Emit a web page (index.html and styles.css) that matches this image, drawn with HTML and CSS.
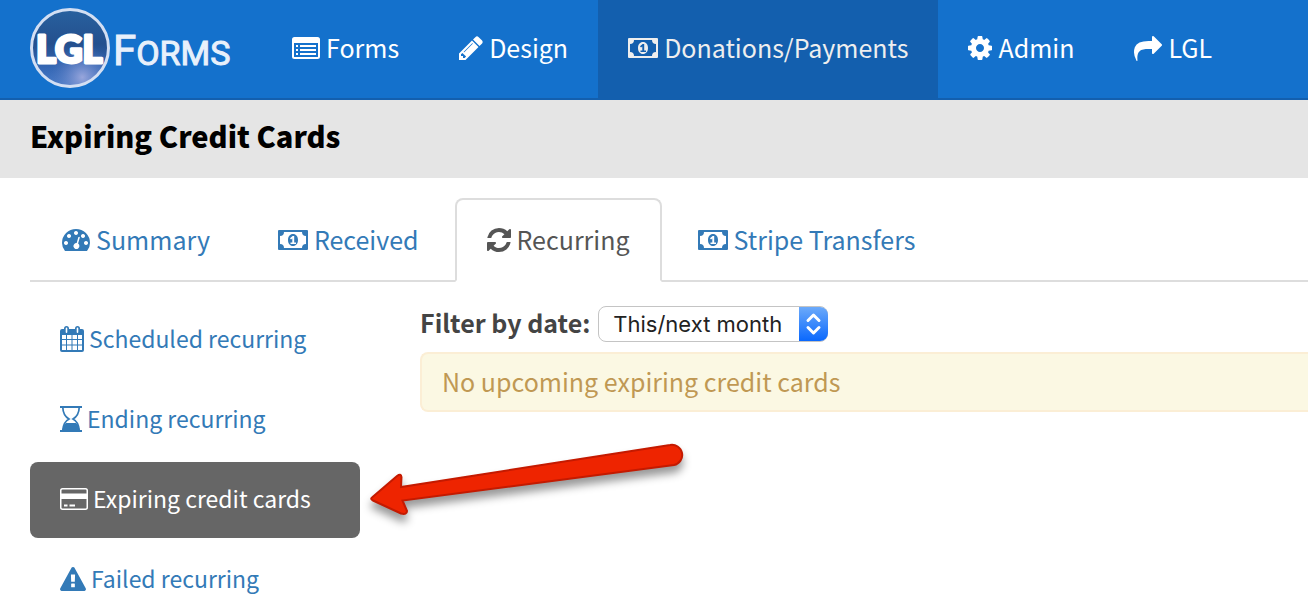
FILE: index.html
```html
<!DOCTYPE html>
<html lang="en">
<head>
<meta charset="utf-8">
<meta name="viewport" content="width=device-width, initial-scale=1">
<title>Expiring Credit Cards</title>
<link rel="stylesheet" href="styles.css">
</head>
<body>
<svg class="defs" aria-hidden="true">
  <symbol id="money" viewBox="0 0 30 20"><path fill-rule="evenodd" d="M1 0H29Q30 0 30 1V19Q30 20 29 20H1Q0 20 0 19V1Q0 0 1 0zM6 2A4 4 0 0 1 2 6V14A4 4 0 0 1 6 18H24A4 4 0 0 1 28 14V6A4 4 0 0 1 24 2z"/><path fill-rule="evenodd" d="M15 4C18 4 20 6.500 20 10S18 16 15 16 10 13.500 10 10 12 4 15 4zM12.500 14H18V12.500H16.200V6H14.600L12 8.300L13 9.500L14.300 8.500V12.500H12.500z"/></symbol>
</svg>
<header class="navbar">
  <a class="brand" href="#" aria-label="LGL Forms">
    <svg class="logo" viewBox="0 0 204 80">
      <defs>
        <linearGradient id="disc" x1="0" y1="0" x2="0" y2="1"><stop offset="0" stop-color="#28619f"/><stop offset=".45" stop-color="#24508e"/><stop offset=".75" stop-color="#3567b4"/><stop offset="1" stop-color="#4a7cc8"/></linearGradient>
        <radialGradient id="glow" cx=".66" cy=".88" r=".42"><stop offset="0" stop-color="#98a6dc"/><stop offset="1" stop-color="#5277c0" stop-opacity="0"/></radialGradient>
      </defs>
      <circle cx="40" cy="40" r="38.500" fill="url(#disc)"/>
      <circle cx="40" cy="40" r="38.500" fill="url(#glow)" stroke="#d3dff3" stroke-width="3"/>
      <text class="logo-mark" x="6" y="55">LGL</text>
      <text class="logo-word" x="83" y="57"><tspan class="logo-cap">F</tspan>ORMS</text>
    </svg>
  </a>
  <nav class="menu" aria-label="Main">
    <a class="menu-link" href="#"><svg class="icon" width="28" height="22" viewBox="0 0 28 22"><path fill-rule="evenodd" d="M2.500 0H25.500Q28 0 28 2.500V19.500Q28 22 25.500 22H2.500Q0 22 0 19.500V2.500Q0 0 2.500 0zM2 6V19.500Q2 20 2.500 20H25.500Q26 20 26 19.500V6z"/><path d="M4 8h2v2H4zM8 8h16v2H8zM4 12h2v2H4zM8 12h16v2H8zM4 16h2v2H4zM8 16h16v2H8z"/></svg><span>Forms</span></a>
    <a class="menu-link" href="#"><svg class="icon" width="24" height="24" viewBox="128 128 1536 1536"><path d="M491 1536l91-91-235-235-91 91v107h128v128h107zm523-928q0-22-22-22-10 0-17 7l-542 542q-7 7-7 17 0 22 22 22 10 0 17-7l542-542q7-7 7-17zm-54-192l416 416-832 832h-416v-416zm683 96q0 53-37 90l-166 166-416-416 166-165q36-38 90-38 53 0 91 38l235 234q37 39 37 91z"/></svg><span>Design</span></a>
    <a class="menu-link active" href="#" aria-current="page"><svg class="icon" width="30" height="20"><use href="#money"/></svg><span>Donations/Payments</span></a>
    <a class="menu-link" href="#"><svg class="icon" width="24" height="24" viewBox="128 128 1536 1536"><path d="M1152 896q0-106-75-181t-181-75-181 75-75 181 75 181 181 75 181-75 75-181zm512-109v222q0 12-8 23t-20 13l-185 28q-19 54-39 91 35 50 107 138 10 12 10 25t-9 23q-27 37-99 108t-94 71q-12 0-26-9l-138-108q-44 23-91 38-16 136-29 186-7 28-36 28h-222q-14 0-24.500-8.500t-11.500-21.500l-28-184q-49-16-90-37l-141 107q-10 9-25 9-14 0-25-11-126-114-165-168-7-10-7-23 0-12 8-23 15-21 51-66.500t54-70.500q-27-50-41-99l-183-27q-13-2-21-12.500t-8-23.500v-222q0-12 8-23t19-13l186-28q14-46 39-92-40-57-107-138-10-12-10-24 0-10 9-23 26-36 98.500-107.500t94.500-71.500q13 0 26 10l138 107q44-23 91-38 16-136 29-186 7-28 36-28h222q14 0 24.500 8.500t11.500 21.500l28 184q49 16 90 37l142-107q9-9 24-9 13 0 25 10 129 119 165 170 7 8 7 22 0 12-8 23-15 21-51 66.500t-54 70.500q26 50 41 98l183 28q13 2 21 12.500t8 23.500z"/></svg><span>Admin</span></a>
    <a class="menu-link" href="#"><svg class="icon" width="28" height="26" viewBox="0 0 1792 1664"><path d="M1792 640q0 26-19 45l-512 512q-19 19-45 19t-45-19-19-45v-256h-224q-98 0-175.500 6t-154 21.500-133 42.500-105.500 69.500-80 101-48.500 138.500-17.500 181q0 55 5 123 0 6 2.500 23.500t2.500 26.500q0 15-8.500 25t-23.500 10q-16 0-28-17-7-9-13-22t-13.500-30-10.500-24q-127-285-127-451 0-199 53-333 162-403 875-403h224v-256q0-26 19-45t45-19 45 19l512 512q19 19 19 45z"/></svg><span>LGL</span></a>
  </nav>
</header>
<div class="page-head"><h1>Expiring Credit Cards</h1></div>
<main class="page">
  <nav class="tabs" aria-label="Donations">
    <a class="tab" href="#"><svg class="icon" width="28" height="22" viewBox="0 0 28 22"><path fill-rule="evenodd" d="M3 22Q0 18.500 0 14A14 14 0 0 1 28 14Q28 18.500 25 22zM14 2a2 2 0 1 0 .01 0zM7 5a2 2 0 1 0 .01 0zM21 5a2 2 0 1 0 .01 0zM4 12a2 2 0 1 0 .01 0zM24 12a2 2 0 1 0 .01 0zM16.300 8.200L14.700 14.100A3 3 0 1 0 16.100 14.600L17.800 8.600Q17.800 7.200 16.300 8.200z"/></svg><span>Summary</span></a>
    <a class="tab" href="#"><svg class="icon" width="30" height="20"><use href="#money"/></svg><span>Received</span></a>
    <a class="tab active" href="#" aria-current="page"><svg class="icon" width="24" height="24" viewBox="128 128 1536 1536"><path d="M1639 1056q0 5-1 7-64 268-268 434.500t-478 166.500q-146 0-282.500-55t-243.500-157l-129 129q-19 19-45 19t-45-19-19-45v-448q0-26 19-45t45-19h448q26 0 45 19t19 45-19 45l-137 137q71 66 161 102t187 36q134 0 250-65t186-179q11-17 53-117 8-23 30-23h192q13 0 22.500 9.500t9.500 22.500zm25-800v448q0 26-19 45t-45 19h-448q-26 0-45-19t-19-45 19-45l138-138q-148-137-349-137-134 0-250 65t-186 179q-11 17-53 117-8 23-30 23h-199q-13 0-22.500-9.500t-9.500-22.500v-7q65-268 270-434.500t480-166.500q146 0 284 55.500t245 156.500l130-129q19-19 45-19t45 19 19 45z"/></svg><span>Recurring</span></a>
    <a class="tab" href="#"><svg class="icon" width="30" height="20"><use href="#money"/></svg><span>Stripe Transfers</span></a>
  </nav>
  <div class="columns">
    <nav class="side" aria-label="Recurring">
      <a class="side-link" href="#"><svg class="icon" width="24" height="26" viewBox="0 0 24 26"><path fill-rule="evenodd" d="M2 3H4V2.500Q4 0 6.500 0T9 2.500V3H15V2.500Q15 0 17.500 0T20 2.500V3H22Q24 3 24 5V24Q24 26 22 26H2Q0 26 0 24V5Q0 3 2 3zM5.700 2.500V6Q5.700 7 6.500 7T7.300 6V2.500Q7.300 1.500 6.500 1.500T5.700 2.500zM16.700 2.500V6Q16.700 7 17.500 7T18.300 6V2.500Q18.300 1.500 17.500 1.500T16.700 2.500zM2 9V13H6V9zM7 9V13H11.500V9zM12.500 9V13H17V9zM18 9V13H22V9zM2 14V18.500H6V14zM7 14V18.500H11.500V14zM12.500 14V18.500H17V14zM18 14V18.500H22V14zM2 19.500V24H6V19.500zM7 19.500V24H11.500V19.500zM12.500 19.500V24H17V19.500zM18 19.500V24H22V19.500z"/></svg><span>Scheduled recurring</span></a>
      <a class="side-link" href="#"><svg class="icon" width="22" height="26" viewBox="0 0 22 26"><path d="M0 0H22V2H0zM0 24H22V26H0zM2 24Q2.500 20 6 17H16Q19.500 20 20 24z"/><path d="M2.800 1.500C3 8 5.500 11 9 13C5.500 15 3 18 2.800 24.500M19.200 1.500C19 8 16.500 11 13 13C16.500 15 19 18 19.200 24.500" fill="none" stroke="currentColor" stroke-width="1.700"/></svg><span>Ending recurring</span></a>
      <a class="side-link active" href="#" aria-current="page"><svg class="icon" width="28" height="22" viewBox="0 0 28 22"><path fill-rule="evenodd" d="M2.500 0H25.500Q28 0 28 2.500V19.500Q28 22 25.500 22H2.500Q0 22 0 19.500V2.500Q0 0 2.500 0zM1.500 5.500H26.500V2.500Q26.500 1.500 25.500 1.500H2.500Q1.500 1.500 1.500 2.500zM1.500 11V19.500Q1.500 20.500 2.500 20.500H25.500Q26.500 20.500 26.500 19.500V11z"/><path d="M4 16.500h3.500v2H4zM9.500 16.500H15v2H9.500z"/></svg><span>Expiring credit cards</span></a>
      <a class="side-link" href="#"><svg class="icon" width="26" height="24" viewBox="0 0 1792 1664"><path d="M1024 1375v-190q0-14-9.500-23.500t-22.500-9.500h-192q-13 0-22.500 9.500t-9.500 23.500v190q0 14 9.500 23.500t22.500 9.500h192q13 0 22.500-9.500t9.500-23.500zm-2-374l18-459q0-12-10-19-13-11-24-11h-220q-11 0-24 11-10 7-10 21l17 457q0 10 10 16.500t24 6.500h185q14 0 23.500-6.500t10.500-16.500zm-14-934l768 1408q35 63-2 126-17 29-46.500 46t-63.500 17h-1536q-34 0-63.500-17t-46.500-46q-37-63-2-126l768-1408q17-31 47-49t65-18 65 18 47 49z"/></svg><span>Failed recurring</span></a>
      <svg class="pointer" viewBox="0 0 340 100" aria-hidden="true"><path d="M12 67.500Q10 69 13 70.500L41 83.500Q47 85 47 81L42.500 70.500L314 35A10 10 0 0 0 310 15L41 57L41.500 47Q41 43 37 46z"/></svg>
    </nav>
    <section class="content">
      <div class="filter">
        <label for="period">Filter by date:</label>
        <div class="select">
          <select id="period"><option>This/next month</option><option>All dates</option></select>
          <svg class="stepper" viewBox="0 0 29 34" aria-hidden="true"><path d="M9 13.500L14.500 8L20 13.500M9 20.500L14.500 26L20 20.500"/></svg>
        </div>
      </div>
      <div class="alert" role="status">No upcoming expiring credit cards</div>
    </section>
  </div>
</main>
</body>
</html>
```
FILE: styles.css
```css
* { box-sizing: border-box; }
body {
  margin: 0;
  background: #fff;
  color: #444;
  font-family: "Noto Sans CJK SC", sans-serif;
  font-size: 25px;
  line-height: 40px;
  overflow-x: hidden;
}
a { color: #337ab7; text-decoration: none; white-space: nowrap; }
a span { padding-bottom: 2px; }
.defs { position: absolute; width: 0; height: 0; }
.icon { display: block; flex: none; fill: currentColor; }

.navbar {
  display: flex;
  align-items: stretch;
  min-height: 100px;
  padding-left: 30px;
  background: #1471cc;
  border-bottom: 2px solid #135fae;
}
.brand { display: flex; align-items: center; margin-right: 28px; }
.logo { display: block; width: 204px; height: 80px; margin-bottom: 2px; }
.logo-mark { font: 900 38px Lato, sans-serif; fill: #fff; stroke: #fff; stroke-width: 3px; stroke-linejoin: round; }
.logo-word { font: 400 34px Roboto, sans-serif; fill: #e8f0fb; stroke: #e8f0fb; stroke-width: 1px; }
.logo-cap { font-size: 42px; }
.menu { display: flex; }
.menu-link {
  display: flex;
  align-items: center;
  gap: 6px;
  padding: 0 30px 2px;
  color: #fff;
}
.menu-link.active { background: #135fae; color: #eee; }

.page-head { padding: 15px 30px 23px; background: #e5e5e5; }
.page-head h1 { margin: 0; color: #000; font-size: 29px; font-weight: 900; line-height: 40px; }

.page { padding: 20px 0 0 30px; }
.tabs { display: flex; gap: 4px; border-bottom: 2px solid #ddd; }
.tab {
  display: flex;
  align-items: center;
  gap: 6px;
  height: 84px;
  margin-bottom: -2px;
  padding: 0 30px;
  border: 2px solid transparent;
  border-radius: 8px 8px 0 0;
}
.tab.active { color: #555; background: #fff; border-color: #ddd; border-bottom-color: #fff; }

.columns { display: flex; gap: 60px; padding-top: 20px; }
.side { position: relative; flex: none; display: grid; gap: 4px; width: 330px; }
.side-link {
  display: flex;
  align-items: center;
  gap: 5px;
  height: 76px;
  padding: 0 30px 2px;
  border-radius: 8px;
  font-size: 23px;
}
.side-link.active { background: #666; color: #fff; }
.pointer {
  position: absolute;
  left: 330px;
  top: 128px;
  width: 340px;
  height: 100px;
  overflow: visible;
  fill: #ee2400;
  stroke: #c41a00;
  stroke-width: 2px;
  filter: drop-shadow(0 7px 4px rgba(0, 0, 0, .4));
  pointer-events: none;
}

.content { flex: 1; min-width: 0; }
.filter { display: flex; align-items: center; gap: 8px; margin-bottom: 10px; }
.filter label { font-weight: 700; }
.select { position: relative; margin-top: 4px; }
.select select {
  display: block;
  appearance: none;
  width: 230px;
  height: 36px;
  padding: 0 30px 0 14px;
  border: 1px solid #c4c4c4;
  border-radius: 8px;
  background: #fff;
  color: #222;
  font: 22px Inter, sans-serif;
}
.stepper {
  position: absolute;
  top: 1px;
  right: 0;
  width: 29px;
  height: 34px;
  border-radius: 0 8px 8px 0;
  background: linear-gradient(#6caafa, #0a68fd);
  fill: none;
  stroke: #fff;
  stroke-width: 3px;
  stroke-linecap: round;
  stroke-linejoin: round;
  pointer-events: none;
}
.alert {
  padding: 7px 20px 9px;
  border: 2px solid #fbeed5;
  border-right: 0;
  border-radius: 8px 0 0 8px;
  background: #fbf8e3;
  color: #c09853;
}
```
